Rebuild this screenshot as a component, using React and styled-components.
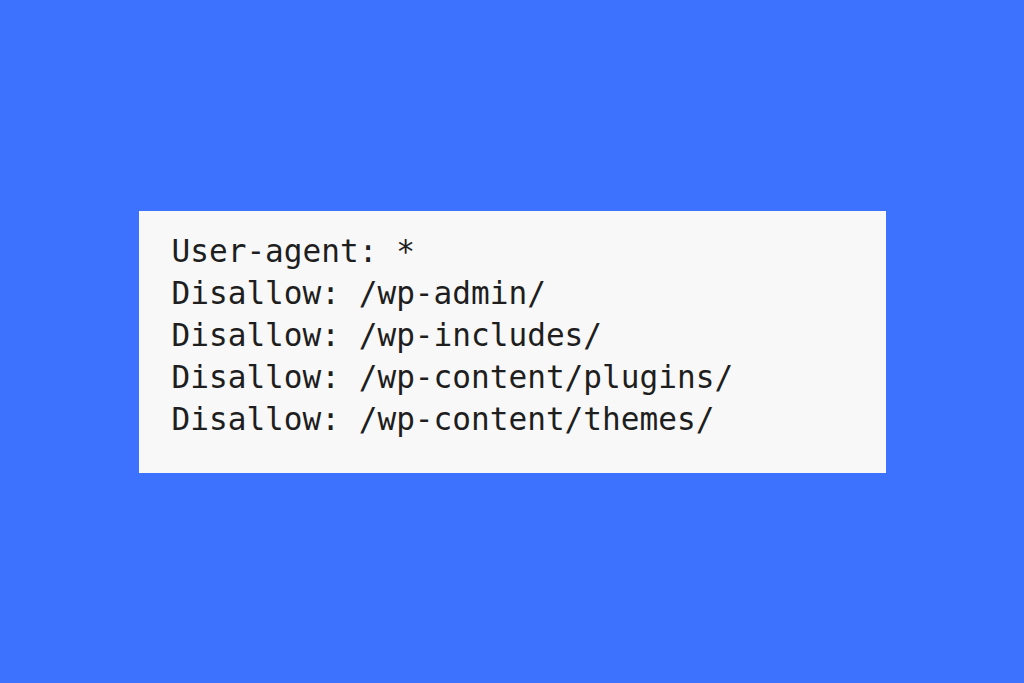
import React from "react";
import styled, { createGlobalStyle } from "styled-components";

const lines = [
  "User-agent: *",
  "Disallow: /wp-admin/",
  "Disallow: /wp-includes/",
  "Disallow: /wp-content/plugins/",
  "Disallow: /wp-content/themes/",
];

export default function App() {
  return (
    <>
      <Global />
      <Page>
        <Card>
          <Code>
            {lines.map((l, i) => (
              <Line key={i}>{l}</Line>
            ))}
          </Code>
        </Card>
      </Page>
    </>
  );
}

const Global = createGlobalStyle`
  html, body {
    margin: 0;
    padding: 0;
    background: #3d72fe;
  }
`;

const Page = styled.div`
  width: 1024px;
  height: 683px;
  display: flex;
  justify-content: center;
  align-items: center;
  background: #3d72fe;
`;

const Card = styled.div`
  width: 747px;
  height: 262px;
  box-sizing: border-box;
  padding: 19px 33px;
  background: #f8f8f8;
`;

const Code = styled.pre`
  margin: 0;
  display: flex;
  flex-flow: column nowrap;
  font-family: "DejaVu Sans Mono", "Liberation Mono", monospace;
  font-size: 31.1px;
  color: #1e1e1e;
`;

const Line = styled.span`
  line-height: 42px;
  white-space: pre;
`;
